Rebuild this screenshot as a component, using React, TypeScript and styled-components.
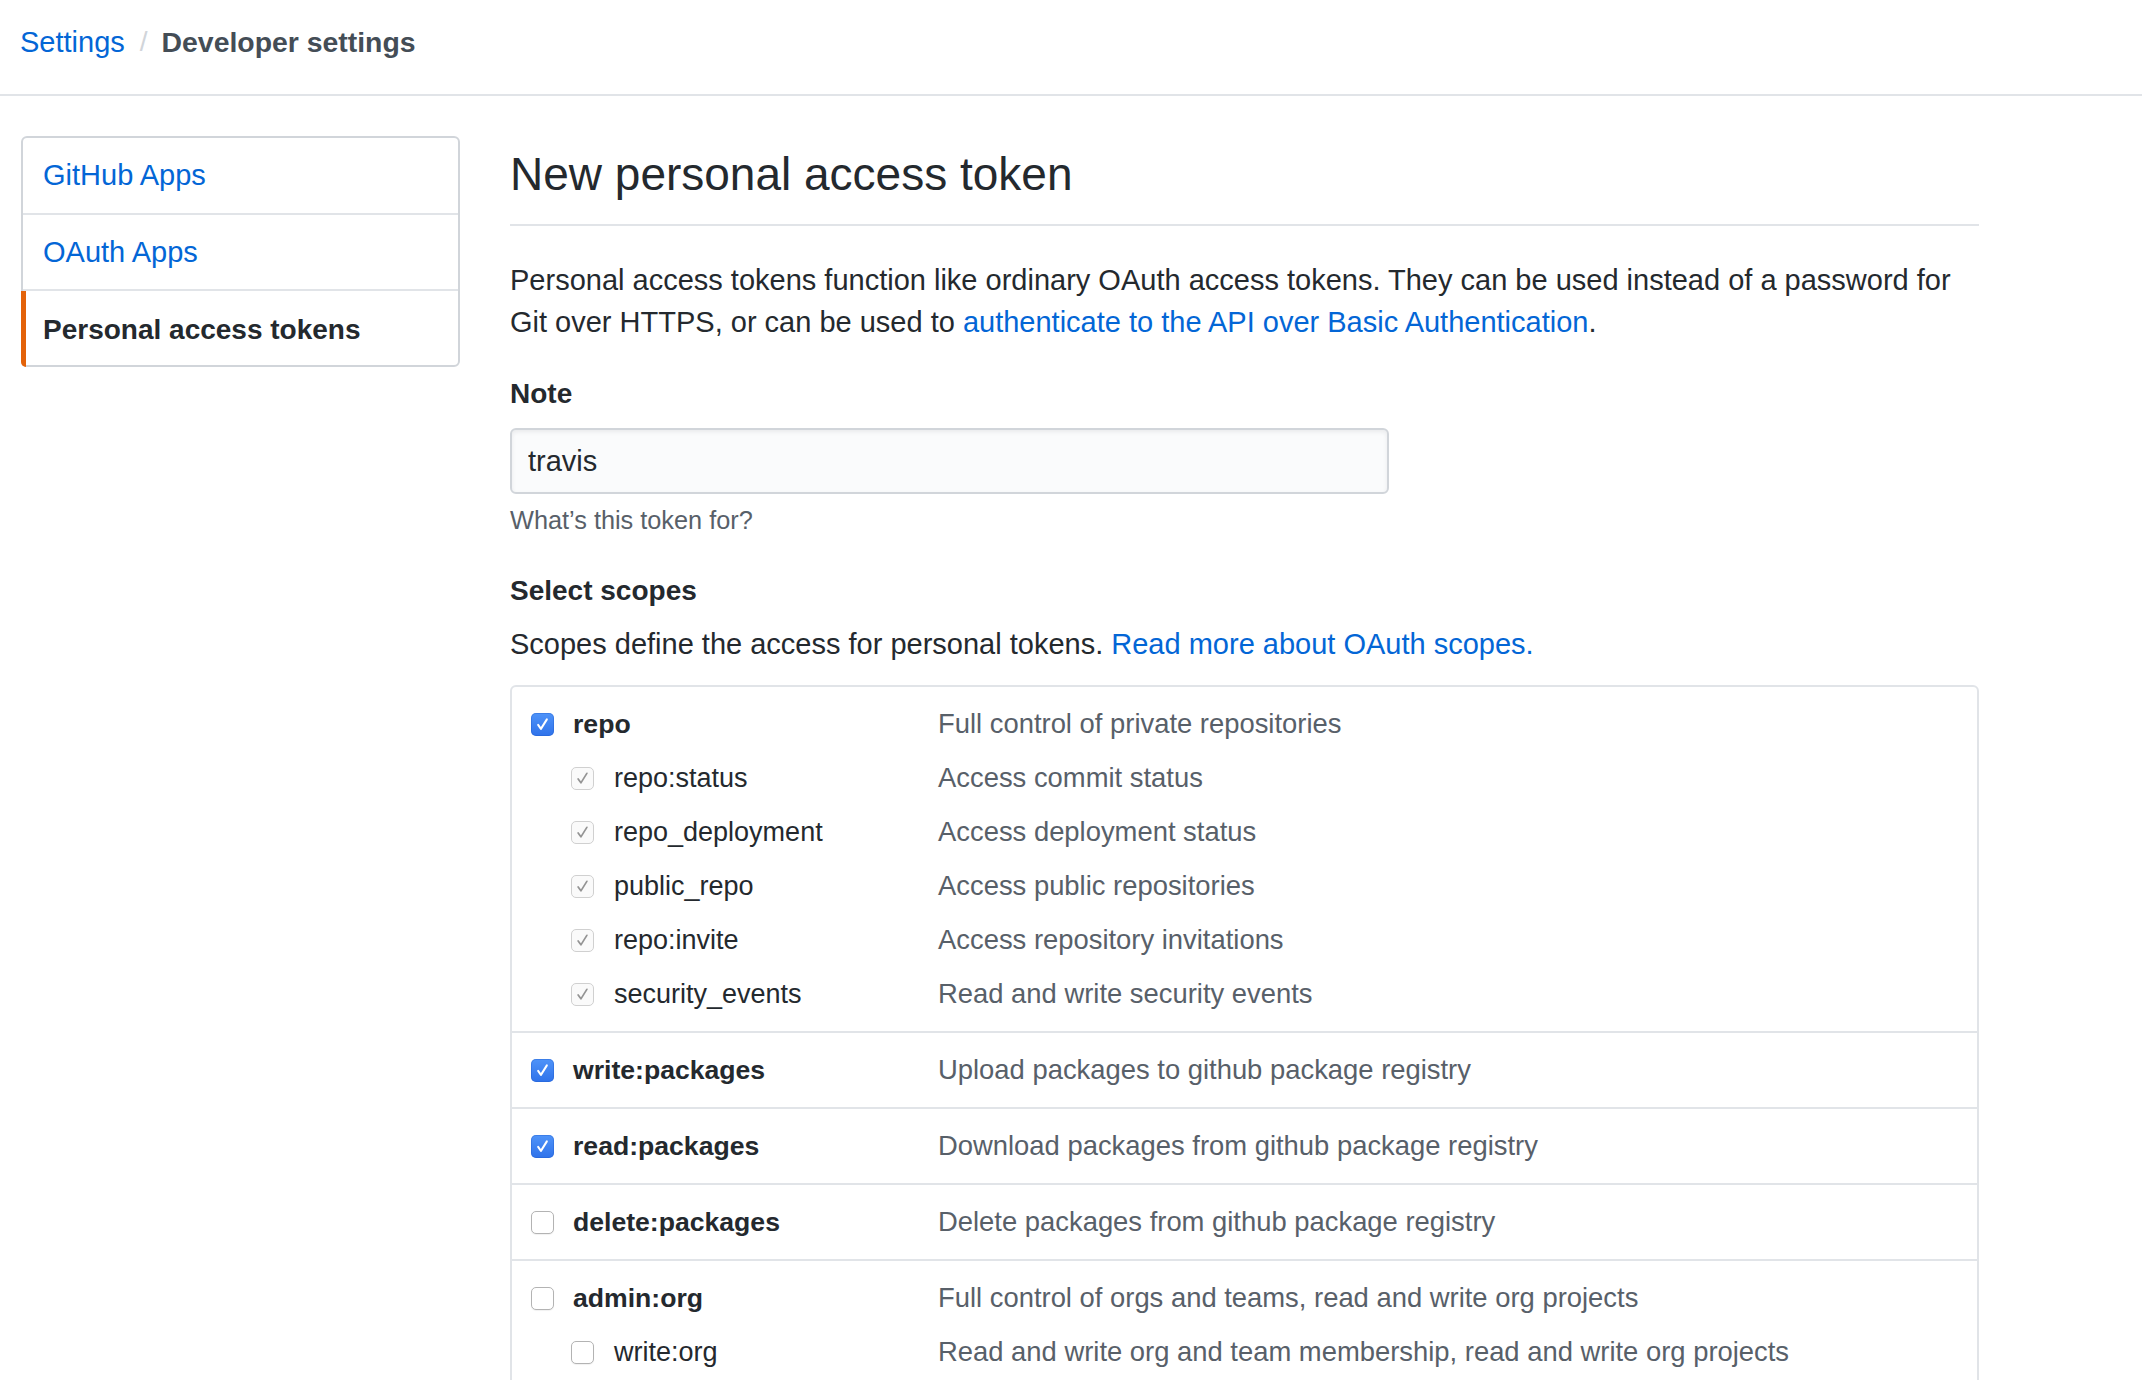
import React from "react";
import styled, { createGlobalStyle, css } from "styled-components";

const GlobalStyle = createGlobalStyle`
  html, body { margin: 0; padding: 0; background: #ffffff; }
  body {
    font-family: "Liberation Sans", Arial, Helvetica, sans-serif;
    color: #24292e;
    -webkit-font-smoothing: antialiased;
  }
  * { box-sizing: border-box; }
`;

const Header = styled.header`
  height: 96px;
  display: flex;
  align-items: center;
  padding: 0 0 10px 20px;
  border-bottom: 2px solid #e1e4e8;
`;

const Crumb = styled.a`
  font-size: 29px;
  color: #0366d6;
  text-decoration: none;
`;

const CrumbSep = styled.span`
  font-size: 28px;
  color: #d1d5da;
  margin: 0 14px 0 15px;
`;

const CrumbCurrent = styled.span`
  font-size: 28.4px;
  font-weight: 700;
  color: #444d56;
`;

const Layout = styled.div`
  display: flex;
  align-items: flex-start;
  gap: 50px;
  padding: 40px 0 0 21px;
`;

const SideNav = styled.nav`
  width: 439px;
  flex: none;
  border: 2px solid #d1d5da;
  border-radius: 6px;
  display: flex;
  flex-direction: column;
`;

const NavItem = styled.a<{ $selected?: boolean }>`
  position: relative;
  display: flex;
  align-items: center;
  height: 75px;
  padding-left: 20px;
  font-size: 29px;
  color: #0366d6;
  text-decoration: none;
  & + & {
    height: 76px;
    border-top: 2px solid #e1e4e8;
  }
  ${(p) =>
    p.$selected &&
    css`
      font-size: 28px;
      font-weight: 700;
      color: #24292e;
      padding-top: 3px;
      &::before {
        content: "";
        position: absolute;
        left: -2px;
        top: 0;
        bottom: -2px;
        width: 5px;
        background: #e36209;
        border-bottom-left-radius: 6px;
      }
    `}
`;

const Main = styled.main`
  width: 1469px;
  flex: none;
  padding-top: 9px;
`;

const Subhead = styled.div`
  padding-bottom: 20px;
  border-bottom: 2px solid #e1e4e8;
`;

const Title = styled.h2`
  margin: 0;
  font-size: 46px;
  font-weight: 400;
  line-height: 59px;
  color: #24292e;
`;

const Lead = styled.p`
  margin: 33px 0 0;
  font-size: 29px;
  line-height: 42px;
  color: #24292e;
`;

const Link = styled.a`
  color: #0366d6;
  text-decoration: none;
`;

const FieldLabel = styled.div<{ $gap: number }>`
  margin-top: ${(p) => p.$gap}px;
  font-size: 28px;
  font-weight: 700;
  line-height: 40px;
  color: #24292e;
`;

const TextInput = styled.input`
  display: block;
  margin-top: 14px;
  width: 879px;
  height: 66px;
  padding: 0 16px;
  font-family: inherit;
  font-size: 29px;
  color: #24292e;
  background: #fafbfc;
  border: 2px solid #d1d5da;
  border-radius: 6px;
  box-shadow: inset 0 2px 4px rgba(27, 31, 35, 0.075);
  outline: none;
`;

const Hint = styled.p`
  margin: 8px 0 0;
  font-size: 25.3px;
  line-height: 36px;
  color: #586069;
`;

const ScopeIntro = styled.p`
  margin: 13px 0 0;
  font-size: 29px;
  line-height: 40px;
  color: #24292e;
`;

const ScopeTable = styled.div`
  margin-top: 21px;
  border: 2px solid #e1e4e8;
  border-radius: 6px;
`;

const ScopeGroup = styled.div`
  padding: 10px 0;
  & + & {
    border-top: 2px solid #e1e4e8;
  }
`;

const ScopeRow = styled.div`
  display: flex;
  align-items: center;
  height: 54px;
`;

const ScopeName = styled.label<{ $child?: boolean }>`
  width: 426px;
  flex: none;
  display: flex;
  align-items: center;
  gap: ${(p) => (p.$child ? 20 : 19)}px;
  padding-left: ${(p) => (p.$child ? 59 : 19)}px;
  font-size: ${(p) => (p.$child ? 27 : 26.6)}px;
  font-weight: ${(p) => (p.$child ? 400 : 700)};
  color: #24292e;
`;

const ScopeDesc = styled.span`
  font-size: 27.4px;
  color: #586069;
`;

type BoxState = "checked" | "disabled" | "empty";

const Box = styled.span<{ $state: BoxState }>`
  width: 23px;
  height: 23px;
  flex: none;
  border-radius: 5px;
  display: inline-flex;
  align-items: center;
  justify-content: center;
  ${(p) =>
    p.$state === "checked"
      ? css`
          background: linear-gradient(#4f94f9, #2f72ea);
          box-shadow: inset 0 0 0 1px rgba(30, 90, 200, 0.35);
          color: #ffffff;
        `
      : p.$state === "disabled"
      ? css`
          background: #fafafa;
          border: 1.5px solid #d0d0d0;
          color: #949494;
        `
      : css`
          background: #ffffff;
          border: 1.5px solid #b3b3b3;
          box-shadow: 0 1px 1px rgba(0, 0, 0, 0.06);
        `}
`;

const CheckBox = ({ state }: { state: BoxState }) => (
  <Box $state={state}>
    {state !== "empty" && (
      <svg width="19" height="19" viewBox="0 0 24 24" fill="none">
        <path
          d="M6.5 12.5 L10 17.5 L17.5 5.5"
          stroke="currentColor"
          strokeWidth={state === "checked" ? 2.5 : 2.2}
          strokeLinecap="round"
          strokeLinejoin="round"
        />
      </svg>
    )}
  </Box>
);

type Scope = {
  name: string;
  desc: string;
  checked: boolean;
  children?: { name: string; desc: string }[];
};

const scopes: Scope[] = [
  {
    name: "repo",
    desc: "Full control of private repositories",
    checked: true,
    children: [
      { name: "repo:status", desc: "Access commit status" },
      { name: "repo_deployment", desc: "Access deployment status" },
      { name: "public_repo", desc: "Access public repositories" },
      { name: "repo:invite", desc: "Access repository invitations" },
      { name: "security_events", desc: "Read and write security events" },
    ],
  },
  { name: "write:packages", desc: "Upload packages to github package registry", checked: true },
  { name: "read:packages", desc: "Download packages from github package registry", checked: true },
  { name: "delete:packages", desc: "Delete packages from github package registry", checked: false },
  {
    name: "admin:org",
    desc: "Full control of orgs and teams, read and write org projects",
    checked: false,
    children: [
      { name: "write:org", desc: "Read and write org and team membership, read and write org projects" },
      { name: "read:org", desc: "Read org and team membership, read org projects" },
    ],
  },
];

export default function App() {
  return (
    <>
      <GlobalStyle />
      <Header>
        <Crumb href="#">Settings</Crumb>
        <CrumbSep>/</CrumbSep>
        <CrumbCurrent>Developer settings</CrumbCurrent>
      </Header>
      <Layout>
        <SideNav>
          <NavItem href="#">GitHub Apps</NavItem>
          <NavItem href="#">OAuth Apps</NavItem>
          <NavItem href="#" $selected>
            Personal access tokens
          </NavItem>
        </SideNav>
        <Main>
          <Subhead>
            <Title>New personal access token</Title>
          </Subhead>
          <Lead>
            Personal access tokens function like ordinary OAuth access tokens. They can be used instead of a password for
            Git over HTTPS, or can be used to <Link href="#">authenticate to the API over Basic Authentication</Link>.
          </Lead>
          <FieldLabel $gap={31}>Note</FieldLabel>
          <TextInput defaultValue="travis" />
          <Hint>What’s this token for?</Hint>
          <FieldLabel $gap={33}>Select scopes</FieldLabel>
          <ScopeIntro>
            Scopes define the access for personal tokens. <Link href="#">Read more about OAuth scopes.</Link>
          </ScopeIntro>
          <ScopeTable>
            {scopes.map((s) => (
              <ScopeGroup key={s.name}>
                <ScopeRow>
                  <ScopeName>
                    <CheckBox state={s.checked ? "checked" : "empty"} />
                    {s.name}
                  </ScopeName>
                  <ScopeDesc>{s.desc}</ScopeDesc>
                </ScopeRow>
                {s.children?.map((c) => (
                  <ScopeRow key={c.name}>
                    <ScopeName $child>
                      <CheckBox state={s.checked ? "disabled" : "empty"} />
                      {c.name}
                    </ScopeName>
                    <ScopeDesc>{c.desc}</ScopeDesc>
                  </ScopeRow>
                ))}
              </ScopeGroup>
            ))}
          </ScopeTable>
        </Main>
      </Layout>
    </>
  );
}
